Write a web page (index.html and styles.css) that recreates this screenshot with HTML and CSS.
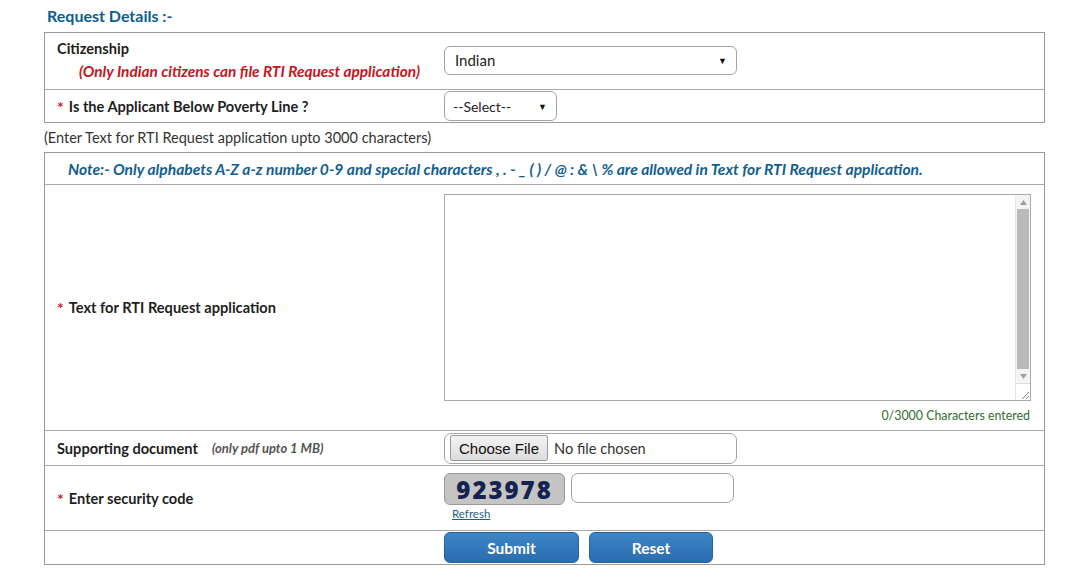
FILE: index.html
```html
<!DOCTYPE html>
<html>
<head>
<meta charset="utf-8">
<link rel="stylesheet" href="styles.css">
</head>
<body>
<div class="page">
  <h2 class="title">Request Details :-</h2>
  <div class="tbl">
    <div class="row row-cit">
      <div class="lbl">
        <div>Citizenship</div>
        <div class="warn">(Only Indian citizens can file RTI Request application)</div>
      </div>
      <div class="val"><div class="sel sel-wide"><span>Indian</span><span class="arr">&#9660;</span></div></div>
    </div>
    <div class="row row-bpl">
      <div class="lbl"><span class="star">*</span> Is the Applicant Below Poverty Line ?</div>
      <div class="val"><div class="sel sel-small"><span>--Select--</span><span class="arr">&#9660;</span></div></div>
    </div>
  </div>
  <p class="hint">(Enter Text for RTI Request application upto 3000 characters)</p>
  <div class="tbl">
    <div class="note">Note:- Only alphabets A-Z a-z number 0-9 and special characters , . - _ ( ) / @ : &amp; \ % are allowed in Text for RTI Request application.</div>
    <div class="row row-text">
      <div class="lbl"><span class="star">*</span> Text for RTI Request application</div>
      <div class="val val-text">
        <div class="ta">
          <div class="ta-body"></div>
          <div class="sb">
            <div class="sb-up"><svg width="7" height="5" viewBox="0 0 7 5"><path d="M0 5L3.5 0L7 5Z" fill="#a0a0a0"/></svg></div>
            <div class="sb-thumb"></div>
            <div class="sb-dn"><svg width="7" height="5" viewBox="0 0 7 5"><path d="M0 0L3.5 5L7 0Z" fill="#a0a0a0"/></svg></div>
            <div class="sb-grip"><svg width="10" height="10" viewBox="0 0 10 10"><path d="M9 2L2 9M9 6L6 9" stroke="#888" stroke-width="1"/></svg></div>
          </div>
        </div>
        <div class="count">0/3000 Characters entered</div>
      </div>
    </div>
    <div class="row row-doc">
      <div class="lbl">Supporting document <span class="small-i">(only pdf upto 1 MB)</span></div>
      <div class="val"><div class="file"><span class="file-btn">Choose File</span><span class="file-txt">No file chosen</span></div></div>
    </div>
    <div class="row row-sec">
      <div class="lbl"><span class="star">*</span> Enter security code</div>
      <div class="val val-sec">
        <div class="cap-line">
          <div class="captcha">923978</div>
          <div class="cap-input"></div>
        </div>
        <a class="refresh" href="#">Refresh</a>
      </div>
    </div>
    <div class="row row-btn">
      <div class="lbl"></div>
      <div class="val btns">
        <div class="btn">Submit</div>
        <div class="btn">Reset</div>
      </div>
    </div>
  </div>
</div>
</body>
</html>
```

FILE: styles.css
```css
* { box-sizing: border-box; }
html, body { margin: 0; padding: 0; background: #fff; }
body { font-family: Lato, "Open Sans", "Liberation Sans", sans-serif; color: #222; font-size: 13px; }
.page { padding: 0 45px 0 44px; width: 1090px; }
.title { margin: 0; padding: 6px 0 0 3px; height: 32px; font-size: 16px; font-weight: 700; color: #0b5d8f; }
.tbl { border: 1px solid #9a9a9a; width: 1001px; }
.row { display: grid; grid-template-columns: 399px 1fr; border-top: 1px solid #a8a8a8; }
.row:first-child { border-top: 0; }
.lbl { padding-left: 12px; font-weight: 700; font-size: 14.6px; color: #1e1e1e; display: flex; align-items: center; white-space: nowrap; }
.star { color: #c0282d; margin-right: 5px; font-size: 16px; }
.row-cit { height: 56px; }
.row-cit .lbl { flex-direction: column; align-items: flex-start; justify-content: flex-start; padding-top: 7px; }
.warn { color: #c4161c; font-style: italic; margin: 5px 0 0 22px; font-size: 15.4px; }
.row-bpl { height: 33px; }
.val { display: flex; align-items: center; }
.sel { border: 1px solid #a4a4a4; border-radius: 6px; display: flex; align-items: center; justify-content: space-between; padding: 0 9px 0 10px; color: #222; background: #fff; }
.arr { font-size: 9px; color: #111; }
.sel-wide { width: 293px; height: 29px; margin-top: -2px; font-size: 15px; }
.sel-small { width: 113px; height: 30px; padding-left: 8px; font-size: 14px; }
.hint { margin: 0; height: 29px; line-height: 29px; font-size: 14.5px; color: #333; }
.note { height: 31px; display: flex; align-items: center; padding-left: 23px; font-weight: 700; font-style: italic; color: #145e8e; font-size: 15.6px; white-space: nowrap; }
.row-text { height: 246px; }
.val-text { flex-direction: column; align-items: stretch; padding: 9px 13px 0 0; }
.ta { height: 207px; border: 1px solid #ababab; display: flex; }
.ta-body { flex: 1; }
.sb { width: 15px; display: flex; flex-direction: column; border-left: 1px solid #e8e8e8; background: #f4f4f4; }
.sb-up, .sb-dn { height: 14px; display: flex; align-items: center; justify-content: center; }
.sb-thumb { flex: 1; background: #b9b9b9; margin: 0 1px; }
.sb-grip { height: 17px; background: #fff; display: flex; align-items: flex-end; justify-content: flex-end; border-top: 1px solid #ddd; }
.count { text-align: right; color: #2f6e2f; font-size: 12.4px; margin-top: 7px; padding-right: 1px; }
.row-doc { height: 35px; }
.small-i { font-weight: 700; font-style: italic; font-size: 13px; color: #555; margin-left: 14px; }
.file { width: 293px; height: 31px; border: 1px solid #a4a4a4; border-radius: 7px; display: flex; align-items: center; padding-left: 5px; }
.file-btn { font-family: "Liberation Sans", Arial, sans-serif; font-size: 15px; color: #111; background: linear-gradient(#f3f3f3, #dcdcdc); border: 1px solid #9a9a9a; border-radius: 2px; height: 26px; padding: 0 8px; display: flex; align-items: center; }
.file-txt { margin-left: 6px; font-size: 14.6px; color: #333; }
.row-sec { height: 65px; }
.val-sec { flex-direction: column; align-items: flex-start; padding-top: 7px; }
.cap-line { display: flex; align-items: center; gap: 6px; }
.captcha { width: 121px; height: 32px; background: #c4c4c4; border: 1px solid #9a9a9a; border-radius: 6px; font-family: "Open Sans", sans-serif; font-weight: 800; font-size: 24px; color: #17214d; letter-spacing: 2px; display: flex; align-items: center; justify-content: center; padding-top: 1px; }
.cap-input { width: 163px; height: 30px; border: 1px solid #a4a4a4; border-radius: 7px; margin-top: -3px; }
.refresh { font-size: 11.5px; color: #1f5e88; margin: 2px 0 0 8px; }
.row-btn { height: 34px; }
.btns { gap: 10px; padding-top: 0; }
.btn { height: 31px; border-radius: 6px; background: linear-gradient(#3e86c6, #2a6cb0); border: 1px solid #2461a0; color: #fff; font-weight: 700; font-size: 15.5px; display: flex; align-items: center; justify-content: center; }
.btn:first-child { width: 135px; }
.btn:last-child { width: 124px; }
```
